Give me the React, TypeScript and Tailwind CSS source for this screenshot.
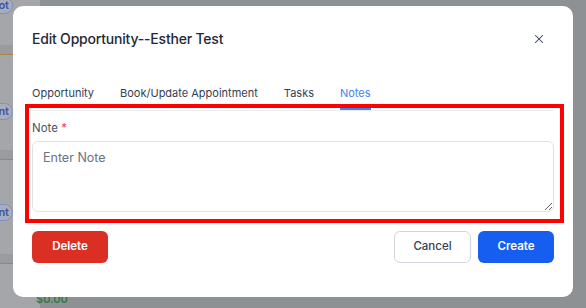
import { X } from 'lucide-react'

const tabs = ['Opportunity', 'Book/Update Appointment', 'Tasks', 'Notes']

function Badge({ label }: { label: string }) {
  return (
    <div className="ml-[-58px] flex h-[17px] w-[71px] items-center justify-end rounded-full border border-[#7f8fbf] bg-[#a7adbb] pr-[3px] text-[11px] font-semibold leading-none text-[#3d55a3]">
      {label}
    </div>
  )
}

function BackgroundList() {
  return (
    <div className="mt-[-3px] flex w-[40px] flex-col bg-[#a4a6a9]">
      <Badge label="Snapshot" />
      <div className="h-[31px]" />
      <div className="h-[9px] bg-[#999b9e]" />
      <div className="h-px bg-[#a8843f]" />
      <div className="h-[48px]" />
      <Badge label="Appointment" />
      <div className="h-[30px]" />
      <div className="h-[9px] bg-[#999b9e]" />
      <div className="h-px bg-[#a8843f]" />
      <div className="h-[44px]" />
      <Badge label="Appointment" />
      <div className="h-[33px]" />
      <div className="h-[9px] bg-[#999b9e]" />
      <div className="h-px bg-[#a8843f]" />
      <div className="h-[27px]" />
      <p className="pl-[36px] text-[11px] font-semibold text-[#2f7a45]">$0.00</p>
    </div>
  )
}

export default function App() {
  return (
    <div className="relative h-[308px] w-[586px] overflow-hidden bg-[#8e9194] font-['Inter',sans-serif]">
      <BackgroundList />

      <div className="absolute left-[13px] top-[6px] flex h-[291px] w-[560px] flex-col rounded-[10px] bg-white px-[19px]">
        <div className="flex h-[63px] items-center justify-between pt-[2px]">
          <h2 className="text-[14px] font-medium tracking-[-0.2px] text-[#1f2937]">Edit Opportunity--Esther Test</h2>
          <button type="button" className="mr-[8px] text-[#344054]">
            <X className="h-[14px] w-[14px]" strokeWidth={1.8} />
          </button>
        </div>

        <div className="mt-[16px] flex gap-[26px] border-b border-[#eaecf0]">
          {tabs.map((tab) => (
            <div
              key={tab}
              className={`text-[11px] leading-[16px] ${tab === 'Notes' ? 'border-b-2 border-[#3b82f6] pb-[7px] text-[#3b82f6]' : 'pb-[9px] text-[#344054]'}`}
            >
              {tab}
            </div>
          ))}
        </div>

        <label className="mt-[9px] text-[11.5px] leading-[16px] text-[#4b5563]">
          Note <span className="text-[#ef4444]">*</span>
        </label>
        <textarea
          placeholder="Enter Note"
          className="mt-[5px] h-[71px] w-full rounded-[6px] border border-[#e0e2e6] px-[10px] py-[7px] text-[12.5px] text-[#1f2937] outline-none placeholder:text-[#6b7280]"
        />

        <div className="mt-[19px] flex items-center">
          <button type="button" className="h-[32px] w-[76px] rounded-[6px] bg-[#dc2f23] text-[11.5px] font-semibold text-white">
            Delete
          </button>
          <div className="ml-auto flex gap-[7px]">
            <button type="button" className="h-[32px] w-[77px] rounded-[6px] border border-[#d0d5dd] bg-white text-[11.5px] font-medium text-[#344054]">
              Cancel
            </button>
            <button type="button" className="h-[32px] w-[76px] rounded-[6px] bg-[#155eef] text-[11.5px] font-semibold text-white">
              Create
            </button>
          </div>
        </div>

        {/* annotation box */}
        <div className="pointer-events-none absolute left-[12px] top-[98px] h-[119px] w-[539px] border-4 border-[#ff0000]" />
      </div>
    </div>
  )
}
